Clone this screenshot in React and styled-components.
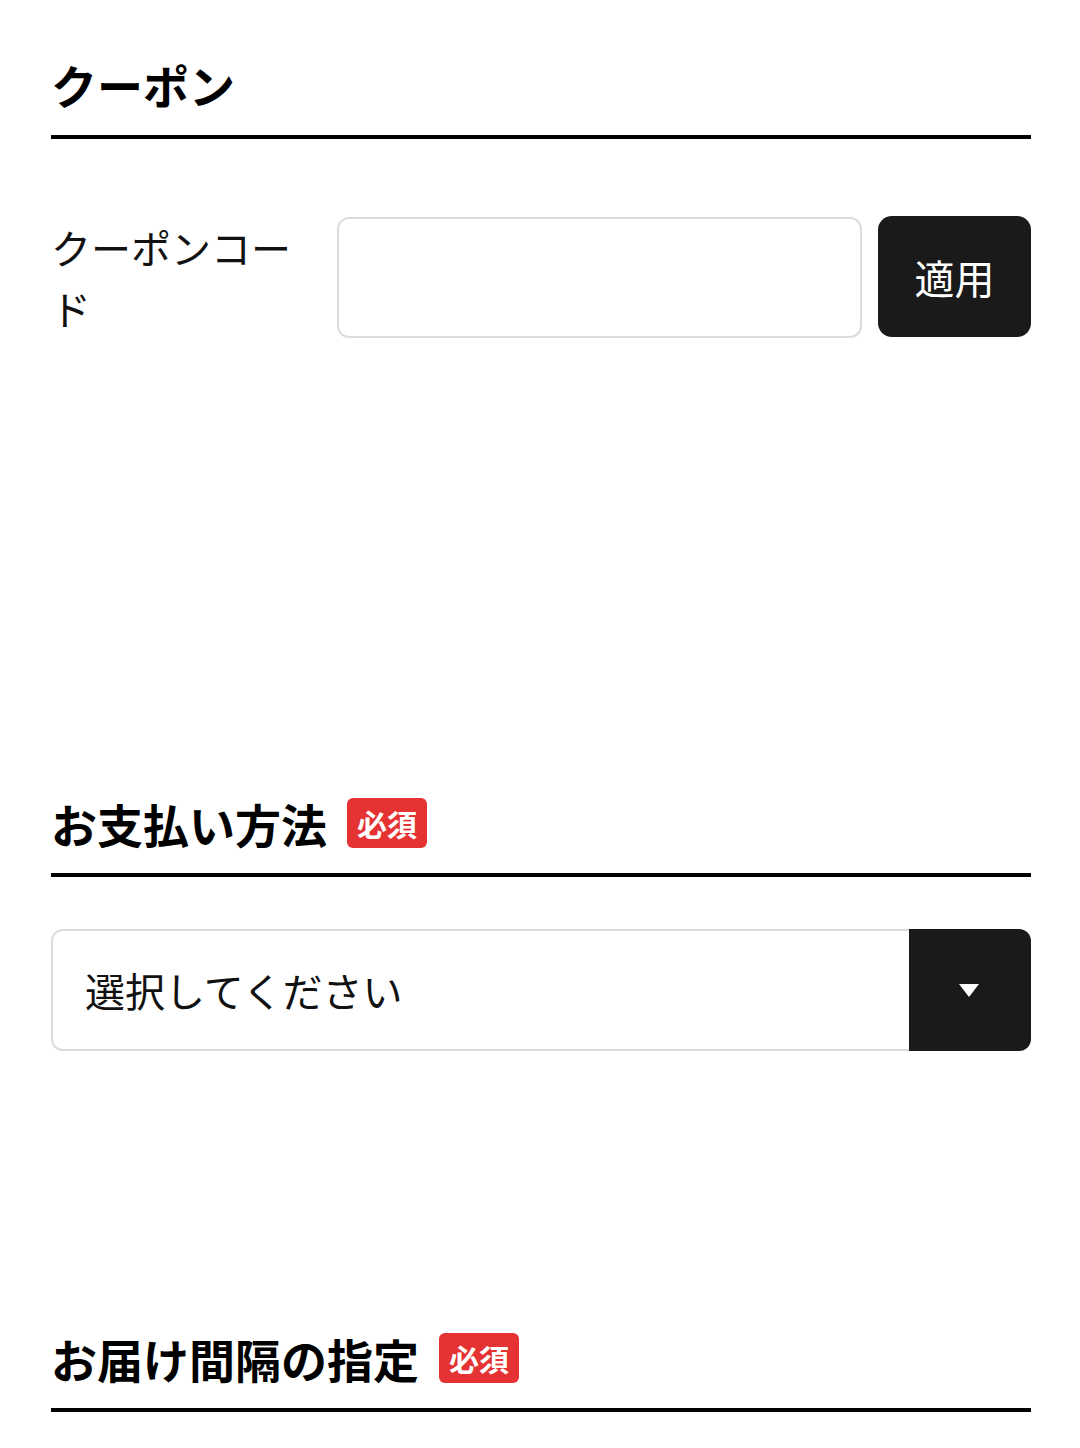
import styled, { createGlobalStyle } from "styled-components";

const GlobalStyle = createGlobalStyle`
  * {
    box-sizing: border-box;
  }
  body {
    margin: 0;
    background: #fff;
    color: #111;
    font-family: "Noto Sans CJK JP", "Noto Sans", sans-serif;
  }
`;

const Page = styled.div`
  padding: 51px 49px 40px 51px;
`;

const Section = styled.section`
  margin-bottom: ${(p) => p.$after || 0}px;
`;

const Head = styled.div`
  display: flex;
  align-items: center;
  gap: 20px;
  padding-bottom: ${(p) => p.$pad || 18}px;
  border-bottom: 4px solid #000;
`;

const Title = styled.h2`
  margin: 0;
  font-size: 46px;
  line-height: 66px;
  font-weight: 700;
  color: #000;
`;

const Badge = styled.span`
  display: inline-flex;
  align-items: center;
  justify-content: center;
  width: 80px;
  height: 50px;
  border-radius: 6px;
  background: #e53232;
  color: #fff;
  font-size: 30px;
  font-weight: 700;
`;

const Body = styled.div`
  margin-top: ${(p) => p.$top}px;
`;

const CouponRow = styled.div`
  display: flex;
  align-items: flex-start;
  gap: 16px;
`;

const Label = styled.div`
  width: 270px;
  flex: 0 0 270px;
  font-size: 40px;
  line-height: 61px;
  padding-top: 1px;
  color: #111;
`;

const Input = styled.input`
  flex: 1;
  height: 121px;
  margin-top: 1px;
  border: 2px solid #dcdcdc;
  border-radius: 12px;
  background: #fff;
  font-family: inherit;
  font-size: 40px;
  padding: 0 24px;
  outline: none;
`;

const Apply = styled.button`
  width: 153px;
  height: 121px;
  border: none;
  border-radius: 14px;
  background: #1a1a1a;
  color: #fff;
  font-family: inherit;
  font-size: 40px;
  cursor: pointer;
`;

const SelectBox = styled.div`
  display: flex;
  height: 122px;
`;

const SelectValue = styled.div`
  flex: 1;
  display: flex;
  align-items: center;
  padding-left: 32px;
  border: 2px solid #dcdcdc;
  border-right: none;
  border-radius: 12px 0 0 12px;
  font-size: 40px;
  color: #111;
`;

const ArrowPanel = styled.div`
  width: 122px;
  display: flex;
  align-items: center;
  justify-content: center;
  background: #1a1a1a;
  border-radius: 0 12px 12px 0;
`;

const Caret = styled.span`
  width: 0;
  height: 0;
  margin-left: -3px;
  border-left: 10px solid transparent;
  border-right: 10px solid transparent;
  border-top: 13px solid #fff;
`;

export default function App() {
  return (
    <>
      <GlobalStyle />
      <Page>
        <Section $after={451}>
          <Head>
            <Title>クーポン</Title>
          </Head>
          <Body $top={77}>
            <CouponRow>
              <Label>クーポンコード</Label>
              <Input type="text" />
              <Apply>適用</Apply>
            </CouponRow>
          </Body>
        </Section>

        <Section $after={274}>
          <Head $pad={17}>
            <Title>お支払い方法</Title>
            <Badge>必須</Badge>
          </Head>
          <Body $top={52}>
            <SelectBox>
              <SelectValue>選択してください</SelectValue>
              <ArrowPanel>
                <Caret />
              </ArrowPanel>
            </SelectBox>
          </Body>
        </Section>

        <Section>
          <Head $pad={17}>
            <Title>お届け間隔の指定</Title>
            <Badge>必須</Badge>
          </Head>
        </Section>
      </Page>
    </>
  );
}
